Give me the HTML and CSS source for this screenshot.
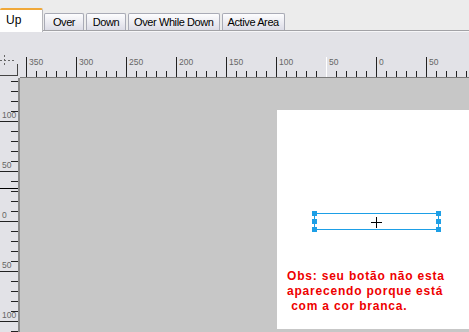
FILE: index.html
```html
<!DOCTYPE html>
<html lang="pt">
<head>
    <meta charset="UTF-8">
    <title>Botão - Up</title>
    <link rel="stylesheet" href="styles.css">
</head>
<body>
    <div class="tabs">
        <div class="tab active">Up</div>
        <div class="tab">Over</div>
        <div class="tab">Down</div>
        <div class="tab">Over While Down</div>
        <div class="tab">Active Area</div>
    </div>

    <div class="editor">
        <div class="corner">
            <svg width="20" height="23" viewBox="0 0 20 23">
                <line x1="4.5" y1="0" x2="4.5" y2="11" stroke="#666" stroke-dasharray="2 2"/>
                <line x1="0" y1="5.5" x2="16" y2="5.5" stroke="#666" stroke-dasharray="2 2"/>
                <line x1="17.5" y1="9" x2="17.5" y2="21" stroke="#444"/>
                <line x1="0" y1="20.5" x2="17" y2="20.5" stroke="#444"/>
            </svg>
        </div>

        <!-- regua horizontal -->
        <div class="hruler">
            <svg width="449" height="22" viewBox="0 0 449 22" id="hruler"></svg>
        </div>

        <!-- regua vertical -->
        <div class="vruler">
            <svg width="18" height="254" viewBox="0 0 18 254" id="vruler"></svg>
        </div>

        <div class="canvas">
            <div class="stage">
                <div class="btn-box">
                    <span class="handle tl"></span>
                    <span class="handle ml"></span>
                    <span class="handle bl"></span>
                    <span class="handle tr"></span>
                    <span class="handle mr"></span>
                    <span class="handle br"></span>
                    <span class="cross"></span>
                </div>
                <p class="note">Obs: seu botão não esta<br>aparecendo porque está<br>&nbsp;com a cor branca.</p>
            </div>
        </div>
    </div>

    <script>
        var ns = "http://www.w3.org/2000/svg";

        function add(svg, tag, attrs, text) {
            var el = document.createElementNS(ns, tag);
            for (var k in attrs) el.setAttribute(k, attrs[k]);
            if (text) el.textContent = text;
            svg.appendChild(el);
        }

        // regua de cima
        var h = document.getElementById("hruler");
        var hLabels = ["350", "300", "250", "200", "150", "100", "50", "0", "50"];
        for (var x = 6; x < 449; x += 10) {
            var i = (x - 6) / 10;
            if (i % 5 === 0) {
                var n = i / 5;
                var color = n === 6 ? "#fff" : "#222";
                add(h, "line", {x1: x + 0.5, y1: 2, x2: x + 0.5, y2: 22, stroke: color});
                add(h, "text", {x: x + 3, y: 10, "class": "lbl"}, hLabels[n]);
            } else {
                add(h, "line", {x1: x + 0.5, y1: 16, x2: x + 0.5, y2: 22, stroke: "#222"});
            }
        }

        // regua do lado
        var v = document.getElementById("vruler");
        var vLabels = ["100", "50", "0", "50", "100"];
        for (var y = 3; y < 254; y += 10) {
            var j = (y - 3) / 10;
            if (j >= 4 && (j - 4) % 5 === 0) {
                add(v, "line", {x1: 0, y1: y + 0.5, x2: 18, y2: y + 0.5, stroke: "#222"});
                add(v, "text", {x: 2, y: y - 3, "class": "lbl"}, vLabels[(j - 4) / 5]);
            } else {
                add(v, "line", {x1: 11, y1: y + 0.5, x2: 18, y2: y + 0.5, stroke: "#222"});
            }
        }
        // posicao do mouse
        add(v, "line", {x1: 0, y1: 110.5, x2: 18, y2: 110.5, stroke: "#000"});
    </script>
</body>
</html>
```

FILE: styles.css
```css
body {
    margin: 0;
    width: 469px;
    height: 332px;
    overflow: hidden;
    background-color: #e2e2e7;
    font-family: "Liberation Sans", Arial, sans-serif;
}

.tabs {
    display: flex;
    align-items: flex-end;
    gap: 2px;
    height: 30px;
    background-color: #ececec;
    border-bottom: 1px solid #a2a2a6;
    box-shadow: 0 1px 0 #f6f6f8;
}

.tab {
    box-sizing: border-box;
    min-width: 40px;
    height: 17px;
    padding: 0 5px;
    font-size: 11px;
    letter-spacing: -0.4px;
    line-height: 16px;
    text-align: center;
    color: #000;
    background: linear-gradient(#fdfdfe, #dcdce6);
    border: 1px solid #a9abb6;
    border-bottom: none;
    border-radius: 2px 2px 0 0;
    white-space: nowrap;
}

.tab.active {
    width: 43px;
    height: 24px;
    margin-right: -1px;
    margin-bottom: -2px;
    padding: 2px 0 0 6px;
    font-size: 12px;
    letter-spacing: 0;
    text-align: left;
    background: #fff;
    border: none;
    border-top: 2px solid #f0a838;
    border-right: 1px solid #b6b6bb;
    border-radius: 2px 2px 0 0;
}

.editor {
    display: grid;
    grid-template-columns: 20px 449px;
    grid-template-rows: 23px 254px;
    margin-top: 24px;
}

.corner svg,
.hruler svg,
.vruler svg {
    display: block;
}

.hruler {
    border-bottom: 1px solid #7a7a7a;
}

.vruler {
    border-right: 2px solid #8a8a8a;
}

.lbl {
    font-family: "Liberation Sans", Arial, sans-serif;
    font-size: 8.5px;
    fill: #666;
}

.canvas {
    background-color: #c7c7c7;
    padding: 32px 0 0 257px;
}

.stage {
    position: relative;
    height: 219px;
    background-color: #fff;
}

.btn-box {
    position: absolute;
    left: 37px;
    top: 103px;
    width: 123px;
    height: 15px;
    border: 1px solid #1d9fe6;
}

.handle {
    position: absolute;
    width: 5px;
    height: 5px;
    background-color: #1d9fe6;
}

.handle.tl { left: -3px; top: -3px; }
.handle.ml { left: -3px; top: 5px; }
.handle.bl { left: -3px; top: 13px; }
.handle.tr { right: -3px; top: -3px; }
.handle.mr { right: -3px; top: 5px; }
.handle.br { right: -3px; top: 13px; }

.cross {
    position: absolute;
    left: 56px;
    top: 3px;
    width: 11px;
    height: 11px;
}

.cross::before,
.cross::after {
    content: "";
    position: absolute;
    background-color: #000;
}

.cross::before {
    left: 5px;
    top: 0;
    width: 1px;
    height: 11px;
}

.cross::after {
    left: 0;
    top: 5px;
    width: 11px;
    height: 1px;
}

.note {
    position: absolute;
    left: 10px;
    top: 159px;
    margin: 0;
    font-size: 12px;
    font-weight: bold;
    letter-spacing: 0.8px;
    line-height: 15px;
    color: #ee0000;
}
```
